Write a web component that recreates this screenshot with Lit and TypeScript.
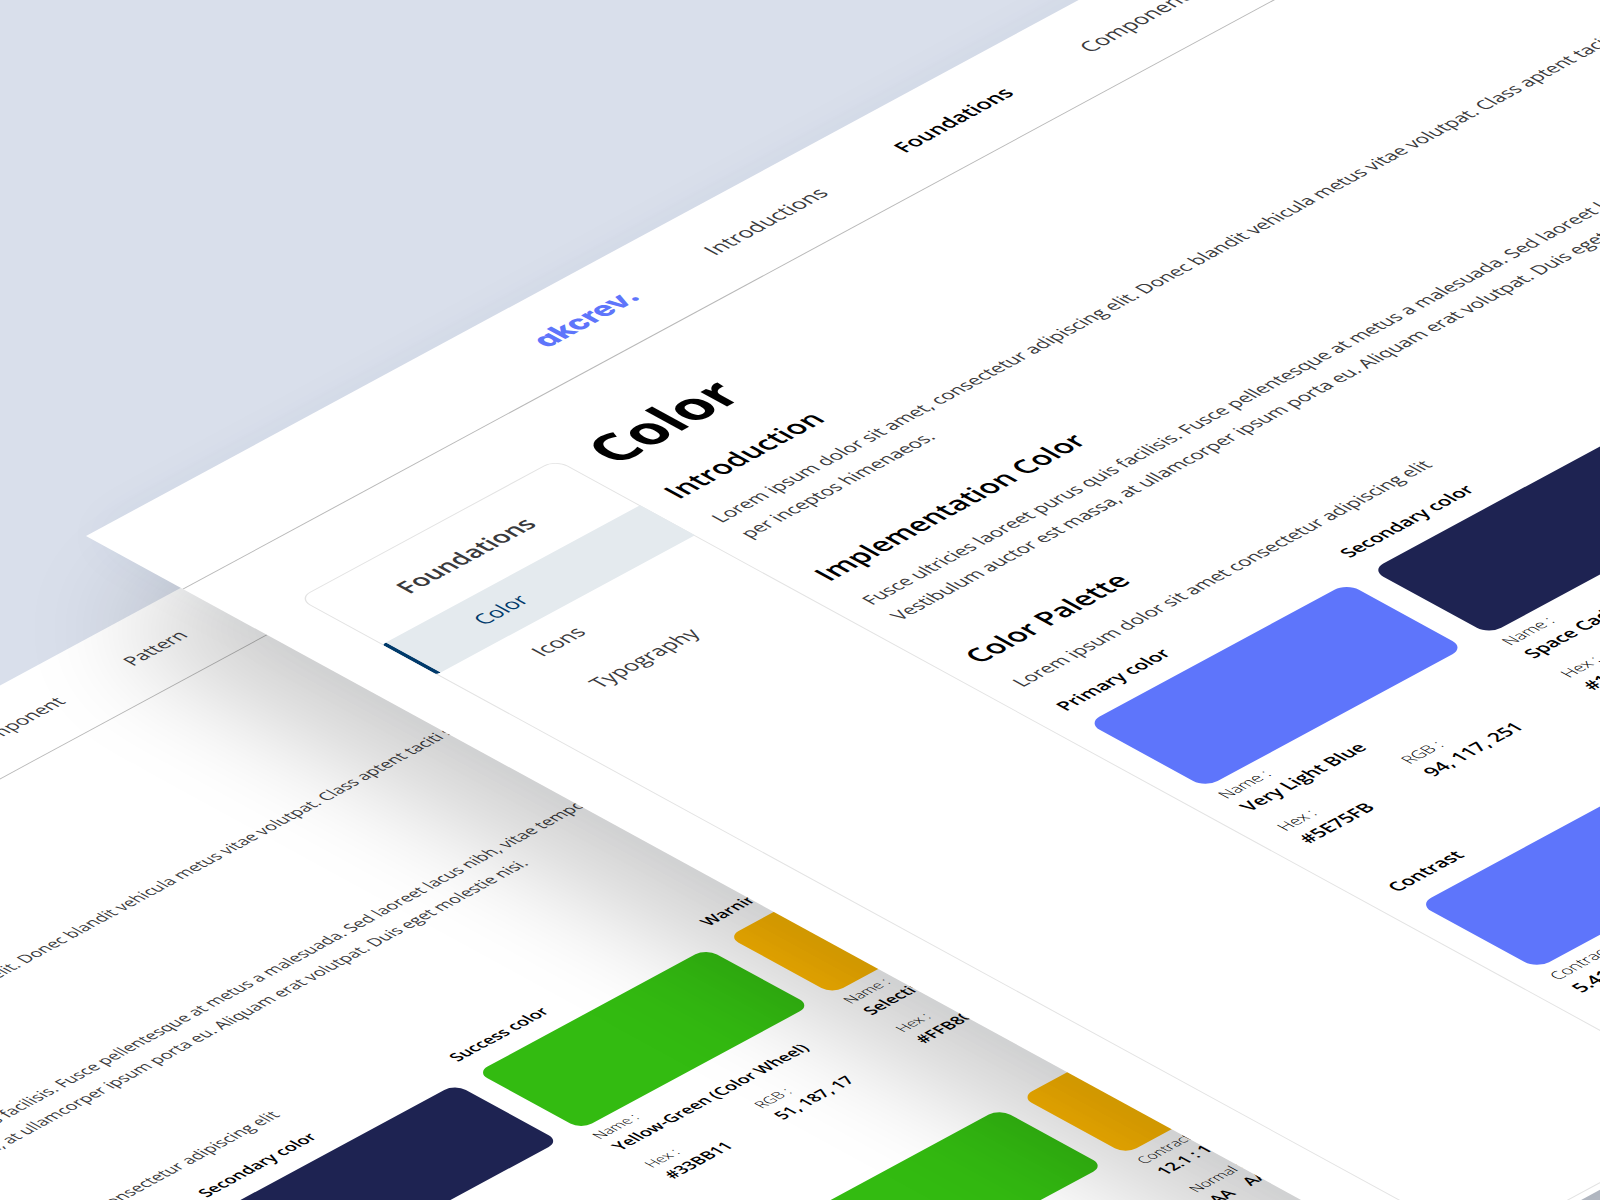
import { LitElement, html, css } from "lit";
import { customElement, property } from "lit/decorators.js";

interface Swatch {
  id: string;
  label: string;
  name: string;
  hex: string;
  rgb: string;
  ratio: string;
}

const SWATCHES: Swatch[] = [
  { id: "primary", label: "Primary color", name: "Very Light Blue", hex: "#5E75FB", rgb: "94, 117, 251", ratio: "5.41 : 1" },
  { id: "secondary", label: "Secondary color", name: "Space Cadet", hex: "#1E2352", rgb: "30, 35, 82", ratio: "15.1 : 1" },
  { id: "success", label: "Success color", name: "Yellow-Green (Color Wheel)", hex: "#33BB11", rgb: "51, 187, 17", ratio: "8.25 : 1" },
  { id: "warning", label: "Warning color", name: "Selective Yellow", hex: "#FFB800", rgb: "255, 184, 0", ratio: "12.1 : 1" },
];

const NAV = ["Introductions", "Foundations", "Component", "Pattern"];
const SIDE = ["Color", "Icons", "Typography"];

@customElement("style-guide")
export class StyleGuide extends LitElement {
  @property() current = "Foundations";

  static styles = css`
    :host {
      display: block;
      background: #fff;
      color: #3a3a3c;
      font-family: "Open Sans", "Noto Sans", sans-serif;
      font-size: 16px;
      line-height: 28px;
      text-rendering: geometricPrecision;
    }
    a {
      color: inherit;
      text-decoration: none;
    }
    h1, h2, h3, p, dl, dd, dt, ul {
      margin: 0;
      padding: 0;
    }
    .bar {
      display: flex;
      align-items: center;
      gap: 74px;
      height: 96px;
      padding-left: 398px;
      border-bottom: 1px solid #b8b8b8;
      box-sizing: border-box;
      font-size: 18px;
    }
    .logo {
      color: #5e75fb;
      font-family: Inter, sans-serif;
      font-feature-settings: "cv11";
      font-weight: 800;
      font-size: 25px;
    }
    .nav {
      display: flex;
      gap: 74px;
    }
    .nav .on {
      color: #000;
      font-weight: 600;
    }
    .body {
      display: flex;
      gap: 24px;
      padding: 40px 48px 6px;
    }
    .side {
      flex: none;
      width: 254px;
      min-height: 1166px;
      margin-top: 24px;
      border: 1px solid #e3e3e3;
      border-radius: 12px;
      box-sizing: border-box;
      padding-top: 28px;
    }
    .side h2 {
      padding: 2px 58px 25px;
      font-size: 21px;
      line-height: 27px;
      font-weight: 600;
    }
    .side ul {
      display: flex;
      flex-direction: column;
      gap: 3px;
      list-style: none;
      font-size: 18px;
    }
    .side a {
      display: block;
      padding: 13px 60px 13px 64px;
      border-left: 4px solid transparent;
      margin-left: -1px;
      margin-right: -1px;
    }
    .side .on {
      background: #e4eaee;
      color: #003a6b;
      border-left-color: #003a6b;
      border-radius: 3px 0 0 3px;
    }
    .main {
      flex: 1;
      padding-top: 10px;
    }
    .main h1, .main h2, .main h3 {
      color: #000;
      font-weight: 600;
    }
    .main h1 {
      font-size: 48px;
      line-height: 66px;
      font-weight: 700;
      padding-bottom: 19px;
    }
    .main h2 {
      font-size: 24px;
      line-height: 36px;
      padding-bottom: 12px;
    }
    .main h3 {
      font-size: 16px;
      line-height: 24px;
      padding-bottom: 15px;
    }
    .block {
      padding-bottom: 44px;
    }
    .tight {
      padding-bottom: 17px;
    }
    .grid {
      display: grid;
      grid-template-columns: repeat(4, 255px);
      column-gap: 24px;
    }
    .palette {
      padding-bottom: 64px;
    }
    .tile {
      height: 116px;
      border-radius: 12px;
      margin-bottom: 7px;
    }
    .primary { background: #5e75fb; }
    .secondary { background: #1e2352; }
    .success { background: #33bb11; }
    .warning { background: #ffb800; }
    .facts {
      display: grid;
      grid-template-columns: 122px 1fr;
      row-gap: 16px;
    }
    .wide {
      grid-column: 1 / -1;
    }
    dt {
      color: #000;
      font-size: 14px;
      line-height: 20px;
      font-weight: 300;
    }
    dd {
      color: #000;
      font-weight: 600;
      line-height: 22px;
      white-space: nowrap;
    }
  `;

  private fact(term: string, value: string, wide = false) {
    return html`<div class=${wide ? "wide" : ""}><dt>${term} :</dt><dd>${value}</dd></div>`;
  }

  render() {
    return html`
      <header class="bar">
        <a class="logo" href="#">akcrev.</a>
        <nav class="nav">
          ${NAV.map((n) => html`<a href="#" class=${n === this.current ? "on" : ""}>${n}</a>`)}
        </nav>
      </header>
      <div class="body">
        <aside class="side">
          <h2>Foundations</h2>
          <ul>
            ${SIDE.map((n, i) => html`<li><a href="#" class=${i === 0 ? "on" : ""}>${n}</a></li>`)}
          </ul>
        </aside>
        <main class="main">
          <h1>Color</h1>
          <section class="block">
            <h2>Introduction</h2>
            <p>
              Lorem ipsum dolor sit amet, consectetur adipiscing elit. Donec blandit vehicula metus vitae volutpat. Class aptent taciti sociosqu ad litora<br />
              per inceptos himenaeos.
            </p>
          </section>
          <section class="block">
            <h2>Implementation Color</h2>
            <p>
              Fusce ultricies laoreet purus quis facilisis. Fusce pellentesque at metus a malesuada. Sed laoreet lacus nibh, vitae tempor dolor<br />
              Vestibulum auctor est massa, at ullamcorper ipsum porta eu. Aliquam erat volutpat. Duis eget molestie nisi.
            </p>
          </section>
          <section class="block tight">
            <h2>Color Palette</h2>
            <p>Lorem ipsum dolor sit amet consectetur adipiscing elit</p>
          </section>
          <div class="grid palette">
            ${SWATCHES.map(
              (s) => html`<section>
                <h3>${s.label}</h3>
                <div class="tile ${s.id}"></div>
                <dl class="facts">
                  ${this.fact("Name", s.name, true)} ${this.fact("Hex", s.hex)} ${this.fact("RGB", s.rgb)}
                </dl>
              </section>`
            )}
          </div>
          <h3>Contrast</h3>
          <div class="grid">
            ${SWATCHES.map(
              (s) => html`<section>
                <div class="tile ${s.id}"></div>
                <dl class="facts">
                  ${this.fact("Contract", s.ratio)} ${this.fact("Color", "#000000")}
                  ${this.fact("Normal", "AA\u2003AAA")} ${this.fact("Large", "AA\u2003AAA")}
                </dl>
              </section>`
            )}
          </div>
        </main>
      </div>
    `;
  }
}

@customElement("app-root")
export class AppRoot extends LitElement {
  static styles = css`
    :host {
      display: block;
      position: relative;
      height: 100vh;
      overflow: hidden;
      background: #d9dfeb;
    }
    .board {
      position: absolute;
      top: 0;
      left: 0;
      width: 1468px;
      transform-origin: 0 0;
    }
    .back {
      transform: matrix(0.9, -0.486, 0.9, 0.4917, -912, 1178);
    }
    .front {
      transform: matrix(1.0167, -0.549, 1.0167, 0.5556, 86, 536);
      box-shadow: -78px 90px 90px rgba(0, 0, 0, 0.18), 0 0 40px rgba(60, 80, 140, 0.04);
    }
  `;

  render() {
    return html`
      <style-guide class="board back"></style-guide>
      <style-guide class="board front"></style-guide>
    `;
  }
}
